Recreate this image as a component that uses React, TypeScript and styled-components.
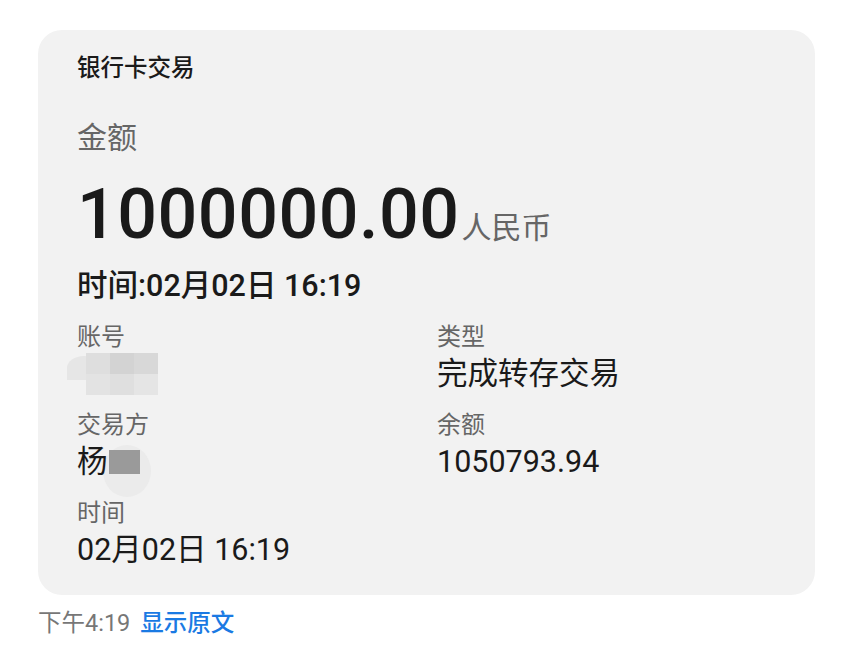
import styled, { createGlobalStyle } from "styled-components";

const GlobalStyle = createGlobalStyle`
  html, body {
    margin: 0;
    padding: 0;
    background: #ffffff;
  }
  body {
    font-family: Roboto, "Noto Sans CJK SC", sans-serif;
    color: #1a1a1a;
  }
`;

const Page = styled.div`
  padding: 30px 0 0 38px;
`;

const Card = styled.div`
  width: 777px;
  box-sizing: border-box;
  background: #f2f2f2;
  border-radius: 24px;
  padding: 22px 39px 25px;
`;

const Title = styled.div`
  font-size: 23.5px;
  line-height: 32px;
  font-weight: 500;
  color: #1a1a1a;
`;

const AmountLabel = styled.div`
  margin-top: 34px;
  font-size: 30px;
  line-height: 40px;
  color: #666;
`;

const AmountRow = styled.div`
  margin-top: 16px;
  display: flex;
  align-items: baseline;
  gap: 2px;
`;

const Amount = styled.span`
  font-size: 70px;
  line-height: 80px;
  font-weight: 500;
  color: #1a1a1a;
  letter-spacing: 0.5px;
`;

const Currency = styled.span`
  font-size: 30px;
  line-height: 40px;
  color: #666;
`;

const TimeLine = styled.div`
  margin-top: 12px;
  font-size: 30.5px;
  line-height: 40px;
  font-weight: 500;
  color: #1a1a1a;
`;

const Fields = styled.div`
  margin-top: 15px;
  display: grid;
  grid-template-columns: 360px 1fr;
  row-gap: 15px;
`;

const Field = styled.div`
  display: flex;
  flex-direction: column;
`;

const Label = styled.div`
  font-size: 24px;
  line-height: 32px;
  color: #666;
`;

const Value = styled.div`
  font-size: 30.5px;
  line-height: 41px;
  color: #1a1a1a;
  height: 41px;
  position: relative;
  isolation: isolate;
`;

const Mosaic = styled.div`
  position: absolute;
  left: 9px;
  top: 0;
  width: 72px;
  height: 42px;
  display: grid;
  grid-template-columns: repeat(3, 24px);
  grid-template-rows: repeat(2, 21px);
  filter: blur(0.6px);

  &::before {
    content: "";
    position: absolute;
    left: -19px;
    top: 3px;
    width: 34px;
    height: 24px;
    border-radius: 50% 50% 0 0;
    background: #e6e6e6;
    z-index: -1;
  }
`;

const Cell = styled.span<{ $shade: string }>`
  background: ${(p) => p.$shade};
`;

const Hidden = styled.span`
  position: relative;
  display: inline-block;
  width: 31px;
  height: 24px;
  margin-left: 1px;
  vertical-align: -2px;
  background: #9a9a9a;

  &::before {
    content: "";
    position: absolute;
    left: -6px;
    top: -5px;
    width: 48px;
    height: 52px;
    border-radius: 50%;
    background: #ebebeb;
    z-index: -1;
  }
`;

const Footer = styled.div`
  margin-top: 12px;
  display: flex;
  align-items: baseline;
  gap: 10px;
  font-size: 23.5px;
  line-height: 32px;
`;

const Stamp = styled.span`
  color: #777;
`;

const Link = styled.span`
  color: #1a7ae3;
  font-weight: 500;
`;

const shades = ["#dedede", "#d3d3d3", "#d8d8d8", "#e3e3e3", "#dfdfdf", "#e5e5e5"];

export default function App() {
  return (
    <>
      <GlobalStyle />
      <Page>
        <Card>
          <Title>银行卡交易</Title>
          <AmountLabel>金额</AmountLabel>
          <AmountRow>
            <Amount>1000000.00</Amount>
            <Currency>人民币</Currency>
          </AmountRow>
          <TimeLine>时间:02月02日 16:19</TimeLine>
          <Fields>
            <Field>
              <Label>账号</Label>
              <Value>
                <Mosaic>
                  {shades.map((s, i) => (
                    <Cell key={i} $shade={s} />
                  ))}
                </Mosaic>
              </Value>
            </Field>
            <Field>
              <Label>类型</Label>
              <Value>完成转存交易</Value>
            </Field>
            <Field>
              <Label>交易方</Label>
              <Value>
                杨<Hidden />
              </Value>
            </Field>
            <Field>
              <Label>余额</Label>
              <Value>1050793.94</Value>
            </Field>
            <Field>
              <Label>时间</Label>
              <Value>02月02日 16:19</Value>
            </Field>
          </Fields>
        </Card>
        <Footer>
          <Stamp>下午4:19</Stamp>
          <Link>显示原文</Link>
        </Footer>
      </Page>
    </>
  );
}
